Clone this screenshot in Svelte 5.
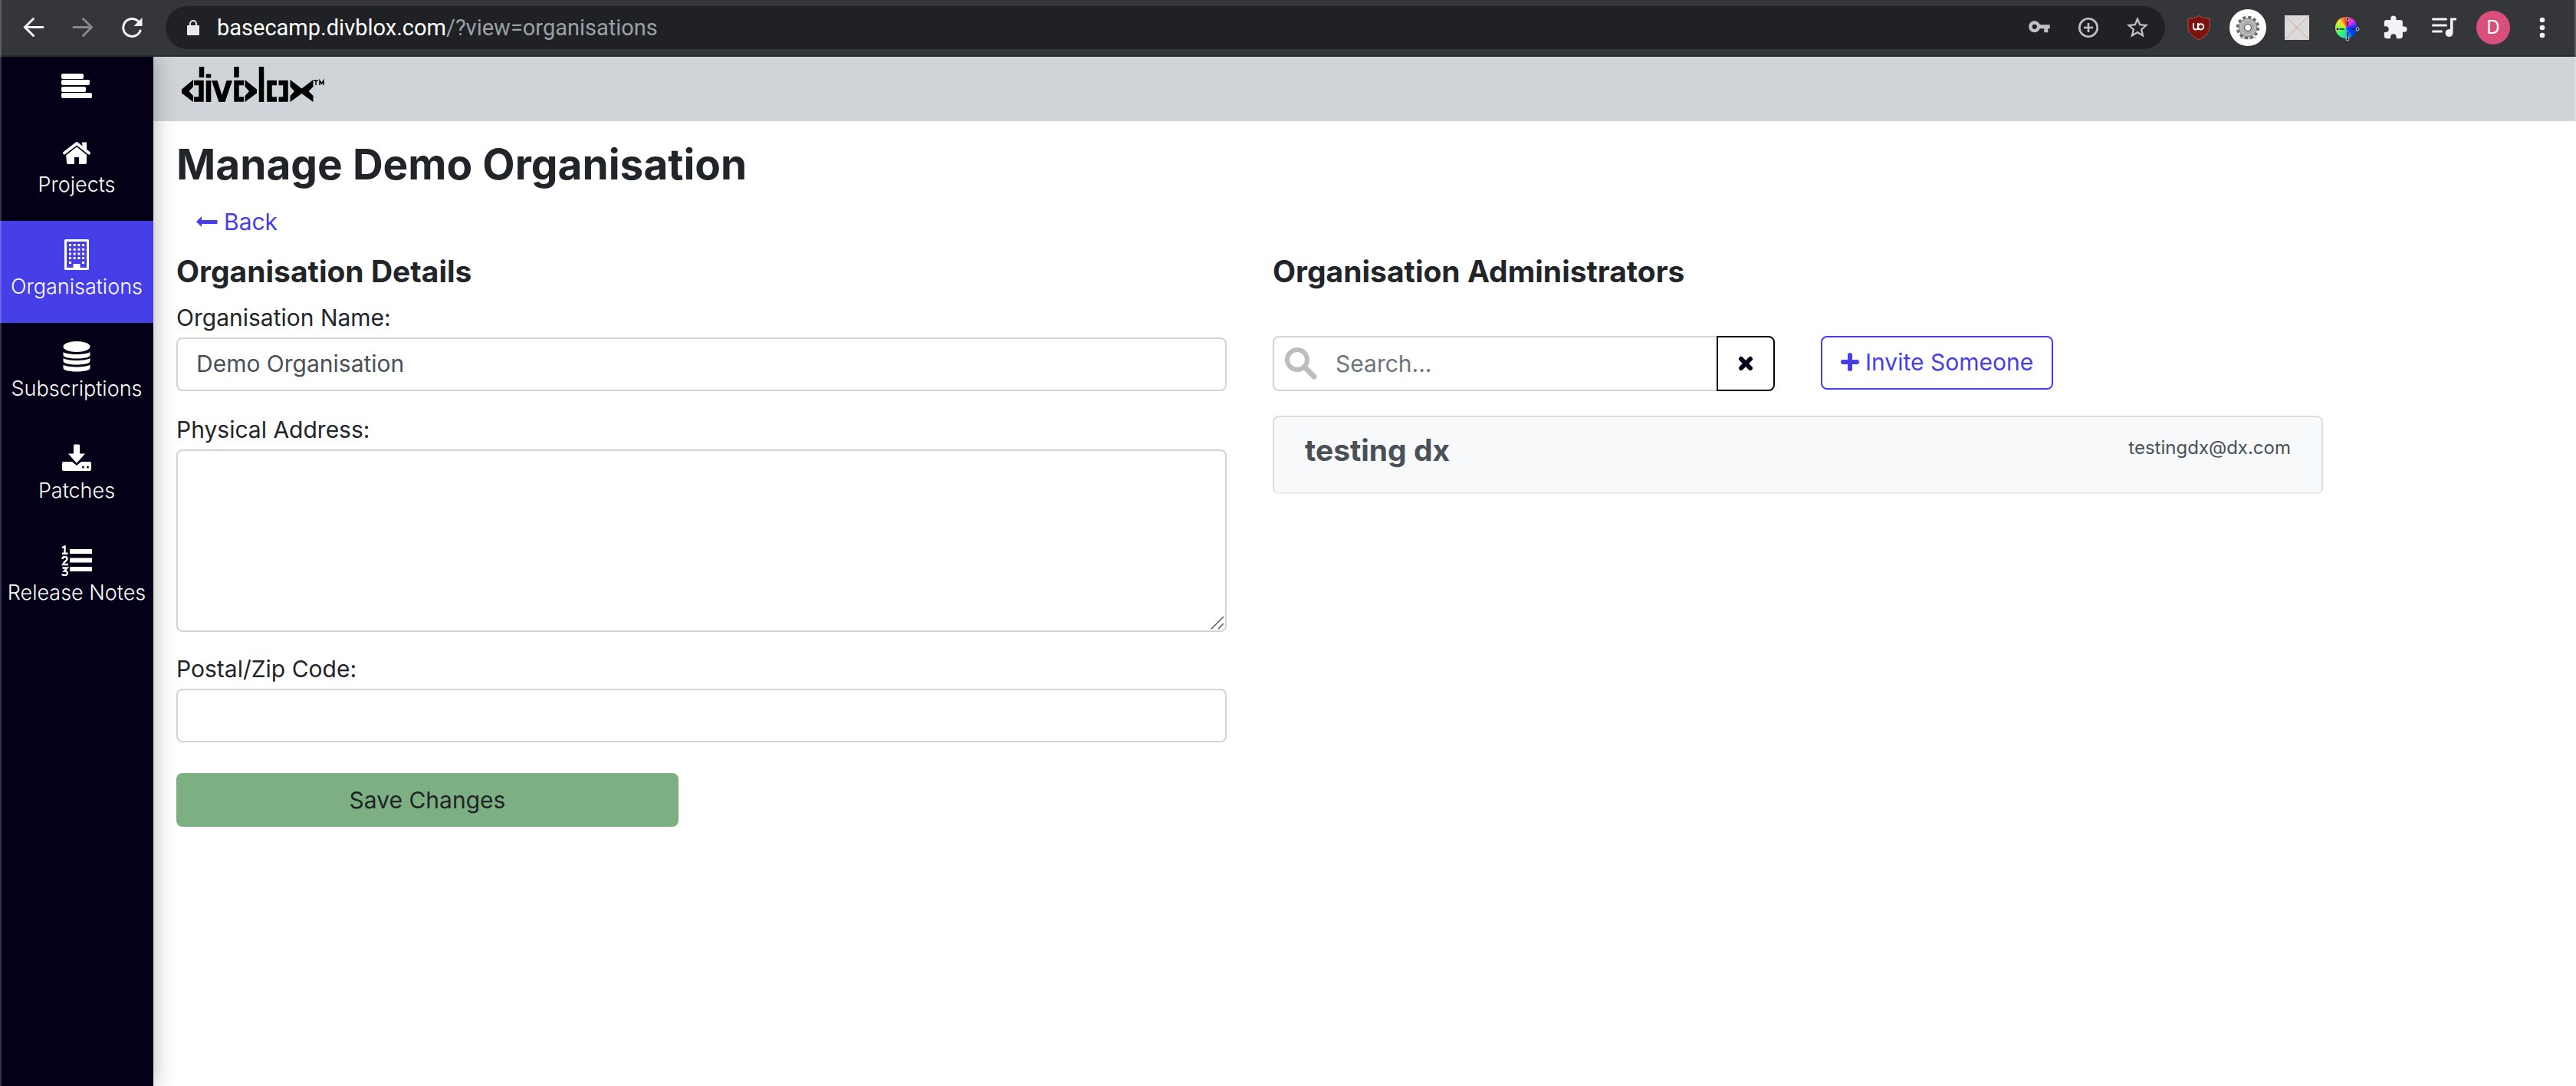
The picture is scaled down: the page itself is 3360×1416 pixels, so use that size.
<script lang="ts">
  let name = $state('Demo Organisation');
  let address = $state('');
  let postal = $state('');
  let search = $state('');
</script>

<div class="window">
  <header class="browser">
    <button class="cell" aria-label="Go back"><svg viewBox="0 0 28 28" width="28" height="28"><path fill="none" stroke="#f1f3f4" stroke-width="3" stroke-linecap="round" d="M26 13.500H3M13.500 2.500l-11 11 11 11" /></svg></button>
    <button class="cell" aria-label="Go forward"><svg viewBox="0 0 28 28" width="28" height="28"><path fill="none" stroke="#86888b" stroke-width="3" stroke-linecap="round" d="M2 13.500h23M14.500 2.500l11 11-11 11" /></svg></button>
    <button class="cell" aria-label="Reload"><svg viewBox="0 0 28 28" width="28" height="28"><path fill="none" stroke="#f1f3f4" stroke-width="3" stroke-linecap="round" d="M25 18A11.500 11.500 0 1 1 23 6.500" /><path fill="#f1f3f4" d="M27.500 1v11h-11z" /></svg></button>
    <div class="omnibox">
      <svg class="lock" viewBox="0 0 18 22" width="18" height="22"><path fill="#e8eaed" d="M2 8h2V6a5 5 0 0 1 10 0v2h2a1 1 0 0 1 1 1v11a1 1 0 0 1-1 1H2a1 1 0 0 1-1-1V9a1 1 0 0 1 1-1zm4 0h6V6a3 3 0 0 0-6 0z" /></svg>
      <span class="url"><b>basecamp.divblox.com</b>/?view=organisations</span>
      <button class="cell" aria-label="Passwords"><svg viewBox="0 1 24 24" width="30" height="30"><path fill="#c0c1c3" d="M12.650 10C11.830 7.670 9.610 6 7 6c-3.310 0-6 2.690-6 6s2.690 6 6 6c2.610 0 4.830-1.670 5.650-4H17v4h4v-4h2v-4H12.650zM7 14.500a2.500 2.500 0 1 1 0-5 2.500 2.500 0 0 1 0 5z" /></svg></button>
      <button class="cell" aria-label="Install"><svg viewBox="0 0 28 28" width="28" height="28"><g fill="none" stroke="#c0c1c3" stroke-width="2.600"><circle cx="14" cy="14" r="11.700" /><path d="M14 8v12M8 14h12" /></g></svg></button>
      <button class="cell" aria-label="Bookmark"><svg viewBox="0 0 24 24" width="34" height="34"><path fill="#c0c1c3" d="M22 9.240l-7.190-.620L12 2 9.190 8.630 2 9.240l5.460 4.730L5.820 21 12 17.270 18.180 21l-1.630-7.030L22 9.240zM12 15.400l-3.760 2.270 1-4.280-3.320-2.880 4.380-.380L12 6.100l1.710 4.040 4.380.380-3.320 2.880 1 4.280L12 15.400z" /></svg></button>
    </div>
    <button class="cell" aria-label="uBlock"><svg viewBox="0 0 30 34" width="30" height="34"><path fill="#7d130d" stroke="#a9524e" d="M15 1.500C11 4 6 5 1 5v11c0 8 6 13 14 17 8-4 14-9 14-17V5C24 5 19 4 15 1.500z" /><path fill="none" stroke="#fff" stroke-width="2" d="M8 11v5.500a3 3 0 0 0 6 0V11v9M14 16a3.600 3.600 0 1 0 3.600-3.800A3.600 3.600 0 0 0 14 16" /></svg></button>
    <button class="cell" aria-label="Settings extension"><svg viewBox="0 0 50 50" width="50" height="50"><circle cx="25" cy="25" r="24" fill="#fff" /><ellipse cx="25" cy="38" rx="11" ry="2.500" fill="#ccc" /><circle cx="25" cy="25" r="13" fill="none" stroke="#666" stroke-width="4.500" stroke-dasharray="3.800 3" /><circle cx="25" cy="25" r="8.500" fill="none" stroke="#bbb" stroke-width="7" /><circle cx="25" cy="25" r="11.800" fill="none" stroke="#777" /><circle cx="25" cy="25" r="7.500" fill="none" stroke="#999" /><circle cx="25" cy="25" r="4.500" fill="#fff" stroke="#666" stroke-width="1.500" /></svg></button>
    <button class="cell" aria-label="Image extension"><svg viewBox="0 0 32 32" width="32" height="32"><path fill="#dadada" d="M0 0h32v32H0z" /><path fill="none" stroke="#e09a9a" d="M1 1l30 30M31 1L1 31" /></svg></button>
    <button class="cell" aria-label="Colour picker">
      <span class="wheel"><svg viewBox="0 0 32 32" width="32" height="32"><path stroke="#222" stroke-width="1.500" d="M16 4v8M16 20v8M4 16h8M20 16h8" /><g fill="#111" stroke="#ddd"><circle cx="16" cy="3" r="2" /><circle cx="16" cy="29" r="2" /><circle cx="3" cy="16" r="2" /><circle cx="29" cy="16" r="2" /></g></svg></span>
    </button>
    <button class="cell" aria-label="Extensions"><svg viewBox="0 0 24 24" width="34" height="34"><path fill="#f1f3f4" d="M20.500 11H19V7c0-1.100-.9-2-2-2h-4V3.500a2.500 2.500 0 0 0-5 0V5H4c-1.100 0-1.990.9-1.990 2v3.800H3.500c1.490 0 2.700 1.210 2.700 2.700s-1.210 2.700-2.700 2.700H2V20c0 1.100.9 2 2 2h3.800v-1.500c0-1.490 1.210-2.700 2.700-2.700s2.700 1.210 2.700 2.700V22H17c1.100 0 2-.9 2-2v-4h1.500a2.500 2.500 0 0 0 0-5z" /></svg></button>
    <button class="cell" aria-label="Media"><svg viewBox="0 0 32 26" width="32" height="26"><path fill="none" stroke="#f1f3f4" stroke-width="3" stroke-linecap="round" d="M1.500 2h17M1.500 10h17M1.500 18h11" /><path fill="#f1f3f4" d="M24 .500h8v3h-4.500V20a5 5 0 1 1-3.500-4.700z" /></svg></button>
    <button class="cell" aria-label="Profile"><span class="avatar">D</span></button>
    <button class="cell" aria-label="Menu"><svg viewBox="0 0 8 28" width="8" height="28"><g fill="#f1f3f4"><circle cx="4" cy="4" r="3.300" /><circle cx="4" cy="14" r="3.300" /><circle cx="4" cy="24" r="3.300" /></g></svg></button>
  </header>

  <div class="app">
    <nav class="sidebar">
      <button class="toggle" aria-label="Toggle menu"><svg viewBox="0 0 40 32" width="40" height="32"><g fill="#fff"><rect y="0" width="29" height="7" rx="2" /><rect y="8" width="37" height="7" rx="2" /><rect y="17" width="32" height="7" rx="2" /><rect y="25" width="40" height="7" rx="2" /></g></svg></button>
      <a class="item" href="#projects">
        <svg viewBox="0 1 40 40" width="40" height="40"><g fill="#fff"><path d="M6 23L20 11l13 12v11a2 2 0 0 1-2 2h-8v-9h-6v9H9a2 2 0 0 1-2-2z" /><path d="M27 8h6v10l-6-5z" /></g><path fill="none" stroke="#030018" stroke-width="7" d="M3 22.500L20 9l17 13.500" /><path fill="none" stroke="#fff" stroke-width="4" stroke-linecap="round" stroke-linejoin="round" d="M4 21.500L20 9l16 12.500" /><path fill="#fff" d="M27.500 7.500h5.500V18l-5.500-4z" /></svg>
        <span>Projects</span>
      </a>
      <a class="item active" href="#organisations">
        <svg viewBox="0 0 32 40" width="32" height="40"><path fill="none" stroke="#fff" stroke-width="3" stroke-linejoin="round" d="M1.500 1.500h29v37h-29z" /><path fill="none" stroke="#fff" stroke-width="3" stroke-dasharray="3 2.700" d="M6 7.500h20.500M6 13.200h20.500M6 18.900h20.500M6 24.600h20.500" /><path fill="#fff" d="M6 29h3v3H6zM23 29h3v3h-3zM11.500 32h9v7h-9z" /></svg>
        <span>Organisations</span>
      </a>
      <a class="item" href="#subscriptions">
        <svg viewBox="0 0 36 40" width="36" height="40"><g fill="#fff"><ellipse cx="18" cy="7" rx="17.500" ry="7" /><path d="M.500 14c5 4 30 4 35 0v4c0 6-35 6-35 0zM.500 22c5 4 30 4 35 0v4c0 6-35 6-35 0zM.500 30.500c5 4 30 4 35 0V35c0 6-35 6-35 0z" /></g></svg>
        <span>Subscriptions</span>
      </a>
      <a class="item" href="#patches">
        <svg viewBox="0 2 40 40" width="40" height="40"><path fill="#fff" d="M3 26h11l6 5 6-5h11a2 2 0 0 1 2 2v8a2 2 0 0 1-2 2H3a2 2 0 0 1-2-2v-8a2 2 0 0 1 2-2z" /><path fill="#fff" stroke="#030018" stroke-width="1" d="M17 3h6a1.500 1.500 0 0 1 1.500 1.500V15H32L20 28.500 8 15h7.500V4.500A1.500 1.500 0 0 1 17 3z" /><circle cx="28.500" cy="33" r="1.500" fill="#030018" /><circle cx="34.500" cy="33" r="1.500" fill="#030018" /></svg>
        <span>Patches</span>
      </a>
      <a class="item" href="#release-notes">
        <svg viewBox="0 0 40 40" width="40" height="40"><path fill="#fff" d="M11 5h29v6H11zM11 16.500h29v6H11zM11 28h29v6H11z" /><path fill="none" stroke="#fff" stroke-width="2.400" d="M1 3l3.500-1.500V11M1 10.800h7.500M1.500 18c0-4 6-4 6 0 0 2.500-5 3.500-5.500 7h7M1.500 29.500h6l-3.500 4c5-.5 5 5.500.5 5.500-1.500 0-3-.5-3.500-1.500" /></svg>
        <span>Release Notes</span>
      </a>
    </nav>

    <div class="page">
      <div class="brand">
        <svg viewBox="0 0 186 46" width="186" height="46" role="img" aria-label="divblox">
          <g fill="none" stroke="#000" stroke-width="6.500">
            <path d="M16 21h9.500v21.500H16M26 0v14M35 18v28M35 9.500v5M71.500 0v14M81 21h-9.500v21.500H81M104 0v46M124 21h-9.500v21.500h9.500M126.500 21h9v21.500h-9" />
          </g>
          <path d="M15 17v9l-5.500 6 5.500 6v8L0 34.500v-5zM82.500 17v9l5.500 6-5.500 6v8L98 34.500v-5zM141.500 17v9l5.500 6-5.500 6v8l15-11 15 11v-8l-6-6 6-6v-9l-15 11.500zM39 18h7.500l6 19 6-19H66l-9.500 28h-8z" />
          <path fill="none" stroke="#000" stroke-width="1.500" d="M172 18h6M175 18v6M180 24v-6l2.500 4 2.500-4v6" />
        </svg>
      </div>

      <main>
        <h1>Manage Demo Organisation</h1>
        <a class="back" href="#back"><svg viewBox="0 0 28 14" width="28" height="14"><path fill="#463fe8" d="M7 0v5h20.500v5H7v4L0 7z" /></svg>Back</a>
        <div class="columns">
          <section>
            <h2>Organisation Details</h2>
            <form>
              <label for="name">Organisation Name:</label>
              <input id="name" class="field" bind:value={name} />
              <label for="address">Physical Address:</label>
              <div class="area">
                <textarea id="address" class="field" bind:value={address}></textarea>
                <svg class="grip" viewBox="0 0 20 20" width="20" height="20"><path stroke="#555" stroke-width="1.500" d="M2 18L18 2M11 18l7-7" /></svg>
              </div>
              <label for="postal">Postal/Zip Code:</label>
              <input id="postal" class="field" bind:value={postal} />
              <div class="halves"><button class="save" type="button">Save Changes</button></div>
            </form>
          </section>
          <section>
            <h2>Organisation Administrators</h2>
            <div class="halves tools">
              <div class="search">
                <div class="searchbox">
                  <svg viewBox="0 0 42 42" width="42" height="42"><g fill="none" stroke="#bdbdbd" stroke-width="6"><circle cx="16" cy="16" r="13" /><path stroke-width="7" d="M26 26l12 12" stroke-linecap="round" /></g></svg>
                  <input aria-label="Search" placeholder="Search..." bind:value={search} />
                </div>
                <button class="clear" aria-label="Clear search"><svg viewBox="0 0 20 20" width="20" height="20"><path stroke="#030018" stroke-width="6" stroke-linecap="round" d="M4 4l12 12M16 4L4 16" /></svg></button>
              </div>
              <button class="invite"><svg viewBox="0 0 24 24" width="24" height="24"><path stroke="#463fe8" stroke-width="6" stroke-linecap="round" d="M12 3v18M3 12h18" /></svg>Invite Someone</button>
            </div>
            <article class="admin">
              <h3>testing dx</h3>
              <span>testingdx@dx.com</span>
            </article>
          </section>
        </div>
      </main>
    </div>
  </div>
</div>

<style>
  :global(body) {
    margin: 0;
    background: #fff;
  }
  .window {
    position: relative;
    min-height: 100vh;
    display: flex;
    flex-direction: column;
    font-family: Inter, "Open Sans", sans-serif;
    font-size: 30px;
    line-height: 44px;
    color: #212529;
  }
  .window::after {
    content: "";
    position: absolute;
    inset: 0;
    z-index: 2;
    border: solid rgba(255, 255, 255, 0.2);
    border-width: 0 2px;
    pointer-events: none;
  }
  button,
  input,
  textarea {
    font: inherit;
    color: inherit;
    box-sizing: border-box;
    margin: 0;
  }
  button {
    cursor: pointer;
  }
  svg {
    display: block;
    flex: none;
  }
  h1,
  h2,
  h3 {
    margin: 0;
    font-weight: 700;
  }

  .browser {
    display: flex;
    align-items: center;
    box-sizing: border-box;
    height: 74px;
    padding: 0 12px;
    background: #35363a;
    border-bottom: 2px solid #28292a;
  }
  .cell {
    flex: none;
    display: grid;
    place-items: center;
    width: 64px;
    height: 56px;
    padding: 0;
    border: 0;
    background: none;
  }
  .omnibox {
    flex: 1;
    display: flex;
    align-items: center;
    height: 56px;
    margin: 0 12px;
    padding: 0 4px 0 27px;
    border-radius: 28px;
    background: #202124;
  }
  .lock {
    margin-right: 22px;
  }
  .url {
    flex: 1;
    font-family: Roboto, sans-serif;
    font-size: 29px;
    color: #9aa0a6;
  }
  .url b {
    font-weight: 400;
    color: #fff;
  }
  .wheel {
    display: grid;
    place-items: center;
    width: 28px;
    height: 28px;
    border-radius: 50%;
    background: conic-gradient(#f33, #e3f, #03f, #04f, #3cc, #3f6, #8f3, #fd3, #f33);
  }
  .avatar {
    width: 44px;
    border-radius: 50%;
    background: #d94f7b;
    color: #fff;
    font-size: 24px;
    text-align: center;
  }

  .app {
    flex: 1;
    display: flex;
  }
  .sidebar {
    flex: none;
    width: 200px;
    background: #030018;
    box-shadow: 0 0 28px rgba(0, 0, 0, 0.3);
    clip-path: inset(0 -40px 0 0);
    z-index: 1;
  }
  .toggle {
    display: flex;
    justify-content: center;
    width: 100%;
    height: 81px;
    padding: 22px 0 0;
    border: 0;
    background: none;
  }
  .item {
    display: flex;
    flex-direction: column;
    align-items: center;
    gap: 2px;
    box-sizing: border-box;
    height: 133px;
    padding-top: 24px;
    color: #fff;
    font-size: 27px;
    font-weight: 300;
    line-height: 40px;
    text-decoration: none;
    white-space: nowrap;
  }
  .active {
    background: #463fe8;
  }

  .page {
    flex: 1;
    min-width: 0;
  }
  .brand {
    height: 84px;
    box-sizing: border-box;
    padding: 13px 37px;
    background: #ced4d8;
  }
  main {
    max-width: 2800px;
    padding: 24px 30px;
  }
  h1 {
    font-size: 55px;
    line-height: 64px;
  }
  .back {
    display: inline-flex;
    align-items: center;
    gap: 8px;
    height: 70px;
    margin-top: 8px;
    padding-left: 26px;
    color: #463fe8;
    text-decoration: none;
  }
  .columns,
  .halves {
    display: grid;
    grid-template-columns: 1fr 1fr;
    gap: 60px;
  }
  h2 {
    font-size: 39px;
    line-height: 44px;
    margin-top: 8px;
  }
  form {
    display: flex;
    flex-direction: column;
    padding-top: 16px;
  }
  label {
    margin-bottom: 4px;
  }
  .field {
    display: block;
    width: 100%;
    height: 70px;
    padding: 0 24px 2px;
    border: 2px solid #ced4da;
    border-radius: 8px;
    background: #fff;
    color: #495057;
    margin-bottom: 28px;
  }
  .area {
    position: relative;
    margin-bottom: 26px;
  }
  .area textarea {
    height: 238px;
    margin: 0;
    padding: 12px 24px;
    resize: vertical;
  }
  .area textarea::-webkit-resizer {
    background: transparent;
  }
  .grip {
    position: absolute;
    right: 2px;
    bottom: 2px;
    pointer-events: none;
  }
  .save {
    height: 70px;
    margin-top: 12px;
    border: 0;
    border-radius: 8px;
    background: #7cb082;
  }
  .tools {
    padding-top: 62px;
  }
  .search {
    display: flex;
    height: 72px;
  }
  .searchbox {
    flex: 1;
    display: flex;
    align-items: center;
    gap: 24px;
    padding-left: 14px;
    border: 2px solid #ced4da;
    border-right: 0;
    border-radius: 8px 0 0 8px;
  }
  .searchbox input {
    flex: 1;
    min-width: 0;
    padding: 0;
    border: 0;
    outline: 0;
    background: none;
  }
  .searchbox input::placeholder {
    color: #6c757d;
    opacity: 1;
  }
  .clear {
    display: grid;
    place-items: center;
    width: 76px;
    border: 2px solid #030018;
    border-radius: 0 8px 8px 0;
    background: #fff;
  }
  .invite {
    display: flex;
    align-items: center;
    gap: 8px;
    justify-self: start;
    height: 70px;
    padding: 0 24px 2px;
    border: 2px solid #463fe8;
    border-radius: 8px;
    background: #fff;
    color: #463fe8;
  }
  .admin {
    display: flex;
    justify-content: space-between;
    height: 102px;
    box-sizing: border-box;
    margin-top: 32px;
    padding: 20px 40px;
    border: 2px solid #dcddde;
    border-bottom-color: #ebeced;
    border-radius: 8px;
    background: #f8f9fb;
    color: #495057;
  }
  h3 {
    font-size: 39px;
    line-height: 46px;
  }
  .admin span {
    font-size: 24px;
    line-height: 40px;
  }
</style>
